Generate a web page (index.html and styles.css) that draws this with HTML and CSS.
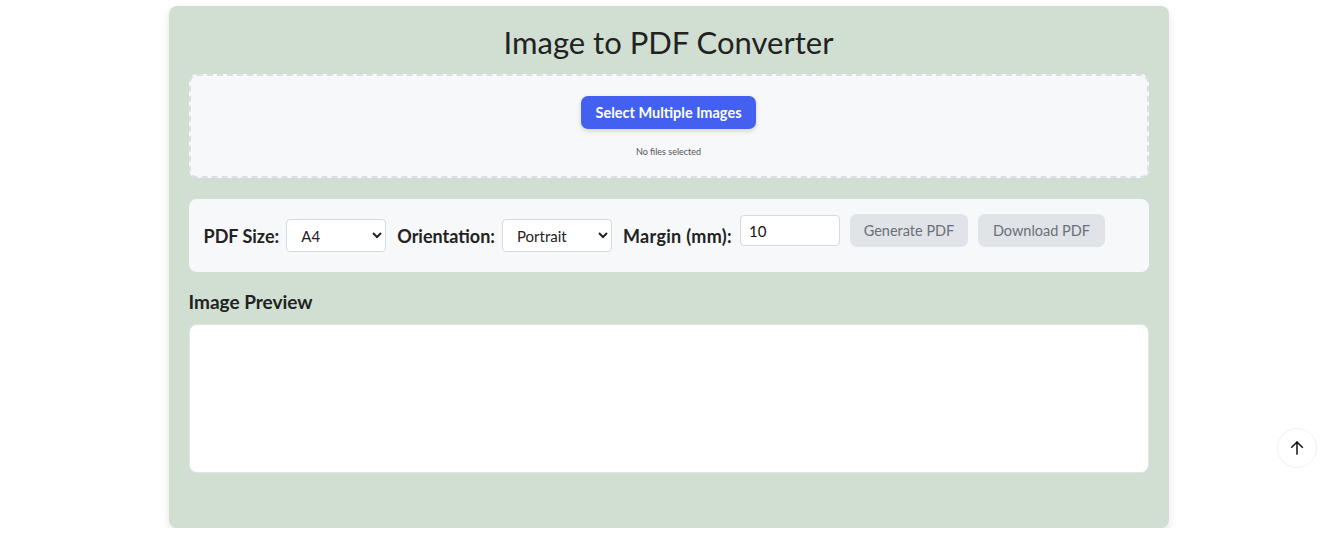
FILE: index.html
```html
<!DOCTYPE html>
<html lang="en">
<head>
<meta charset="utf-8">
<title>Image to PDF Converter</title>
<link rel="stylesheet" href="styles.css">
</head>
<body>
<main class="container">
  <h1 class="title">Image to PDF Converter</h1>
  <section class="upload">
    <button class="btn-primary" type="button">Select Multiple Images</button>
    <p class="file-info">No files selected</p>
  </section>
  <section class="controls">
    <label class="ctl-label">PDF Size:</label>
    <select class="ctl-select sel-size"><option>A4</option></select>
    <label class="ctl-label">Orientation:</label>
    <select class="ctl-select sel-orient"><option>Portrait</option></select>
    <label class="ctl-label lbl-margin">Margin (mm):</label>
    <input class="ctl-input" type="text" value="10">
    <button class="btn-gray btn-gen" type="button">Generate PDF</button>
    <button class="btn-gray btn-dl" type="button">Download PDF</button>
  </section>
  <h2 class="preview-title">Image Preview</h2>
  <section class="preview"></section>
</main>
<button class="to-top" type="button" aria-label="Back to top">
  <svg width="18" height="18" viewBox="0 0 24 24" fill="none" stroke="#111" stroke-width="2" stroke-linecap="square"><path d="M12 20V4M5 11l7-7 7 7"/></svg>
</button>
</body>
</html>
```
FILE: styles.css
```css
* { box-sizing: border-box; }
html, body { margin: 0; padding: 0; background: #fff; }
body { font-family: Lato, "Noto Sans", sans-serif; color: #222; }

.container {
  width: 1000px;
  margin: 6px auto 0;
  background: #d1dfd2;
  border-radius: 8px;
  padding: 20px 20px 55px;
  box-shadow: 0 4px 10px rgba(0,0,0,0.10);
}
.title {
  margin: 0 0 16px;
  text-align: center;
  font-size: 31px;
  line-height: 32px;
  font-weight: 400;
  color: #222;
}
.upload {
  height: 104px;
  border: 2px dashed #dcdfe3;
  border-radius: 8px;
  background: #f7f8fa;
  padding-top: 20px;
  display: flex;
  flex-direction: column;
  align-items: center;
}
.btn-primary {
  height: 33px;
  width: 175px;
  border: none;
  border-radius: 7px;
  background: #4361ee;
  color: #fff;
  font-family: inherit;
  font-weight: 700;
  font-size: 14.5px;
  box-shadow: 0 2px 5px rgba(0,0,0,0.15);
}
.file-info {
  margin: 17px 0 0;
  font-size: 9px;
  line-height: 12px;
  color: #555;
}
.controls {
  margin-top: 21px;
  height: 73px;
  background: #f7f8fa;
  border-radius: 8px;
  padding: 15px;
  display: flex;
  align-items: center;
}
.controls > * { flex: none; }
.ctl-label {
  font-size: 18px;
  font-weight: 700;
  color: #222;
  margin-right: 7px;
}
.lbl-margin { letter-spacing: 0.3px; margin-right: 8px; }
.ctl-select {
  height: 33px;
  border: 1px solid #d7d9dd;
  border-radius: 4px;
  background: #fff;
  font-family: inherit;
  font-size: 15px;
  color: #222;
  padding: 0 6px 0 10px;
  margin-right: 11px;
}
.sel-size { width: 100px; }
.sel-orient { width: 110px; }
.ctl-input {
  align-self: flex-start;
  margin-top: 1px;
  width: 100px;
  height: 31px;
  border: 1px solid #d7d9dd;
  border-radius: 4px;
  background: #fff;
  font-family: inherit;
  font-size: 15px;
  color: #111;
  padding: 0 8px;
  margin-right: 10px;
}
.btn-gray {
  align-self: flex-start;
  height: 33px;
  border: none;
  border-radius: 7px;
  background: #e0e3e7;
  color: #6b7078;
  font-family: inherit;
  font-size: 14.5px;
  padding: 0;
}
.btn-gen { width: 118px; margin-right: 10px; }
.btn-dl { width: 127px; }
.preview-title {
  margin: 19px 0 11px;
  font-size: 19px;
  line-height: 22px;
  font-weight: 700;
  color: #222;
}
.preview {
  height: 149px;
  background: #fff;
  border: 1px solid #e2e5e8;
  border-radius: 8px;
}
.to-top {
  position: fixed;
  right: 20px;
  bottom: 68px;
  width: 40px;
  height: 40px;
  border-radius: 50%;
  background: #fff;
  border: 1px solid #f0f0f0;
  display: flex;
  align-items: center;
  justify-content: center;
  padding: 0;
}
```
